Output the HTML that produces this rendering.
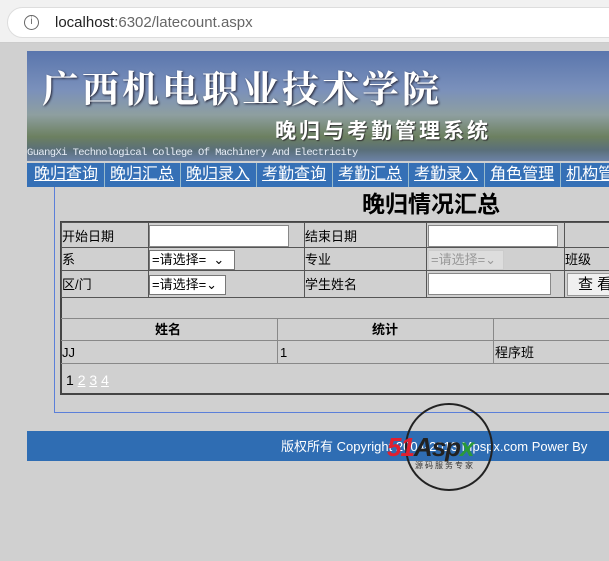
<!DOCTYPE html>
<html><head><meta charset="utf-8"><style>
*{margin:0;padding:0;box-sizing:border-box}
body{width:609px;height:561px;overflow:hidden;background:#d0d0d0;font-family:"Liberation Sans","Noto Sans CJK SC",sans-serif;position:relative;font-size:13px;color:#000;line-height:1}
.a{position:absolute}
#bar{left:0;top:0;width:609px;height:43px;background:#f1f1f1;border-bottom:1px solid #ccc}
#pill{left:7px;top:7px;width:620px;height:31px;background:#fff;border:1px solid #ddd;border-radius:16px}
#banner{left:27px;top:51px;width:582px;height:110px;background:linear-gradient(180deg,#5a76ad 0%,#7a90bb 35%,#8e9fa0 58%,#6c8060 78%,#5a6f7a 90%,#6c83a6 100%)}
#nav{left:27px;top:163px;width:582px;height:24px;background:#3570b6;white-space:nowrap;overflow:hidden;padding-left:2px}
#nav span{display:inline-block;color:#fff;text-decoration:underline;font-size:16px;line-height:24px;padding:0 6px 0 5px;border-right:1px solid #9bc}
.cell{position:absolute;border:1px solid #555}
input.t{position:absolute;background:#fff;border:1px solid #888;height:22px}
.sel{position:absolute;background:#fff;border:1px solid #777;height:20px;font-size:13px;line-height:18px;padding-left:2px}
</style></head><body>
<div id="bar" class="a"></div>
<div id="pill" class="a"></div>
<div class="a" style="left:24px;top:15px;width:15px;height:15px;border:1.5px solid #666;border-radius:50%;font-size:10px;line-height:12px;text-align:center;color:#666">i</div>
<div class="a" style="left:55px;top:15px;font-size:15px;color:#222">localhost<span style="color:#666">:6302/latecount.aspx</span></div>
<div id="banner" class="a"></div>
<div class="a" style="left:42px;top:68px;font-family:'Noto Serif CJK SC',serif;font-weight:bold;font-size:37px;letter-spacing:3px;color:#fff;text-shadow:1px 1px 2px #223">广西机电职业技术学院</div>
<div class="a" style="left:275px;top:121px;font-size:21px;letter-spacing:3px;color:#fff;font-weight:bold;text-shadow:1px 1px 1px #333">晚归与考勤管理系统</div>
<div class="a" style="left:27px;top:148px;font-family:'Liberation Mono',monospace;font-size:10.5px;letter-spacing:-0.6px;color:#e8eef8">GuangXi Technological College Of Machinery And Electricity</div>
<div id="nav" class="a"><span>晚归查询</span><span>晚归汇总</span><span>晚归录入</span><span>考勤查询</span><span>考勤汇总</span><span>考勤录入</span><span>角色管理</span><span>机构管理</span></div>
<div class="a" style="left:54px;top:187px;width:560px;height:226px;border-left:1px solid #5b7fd9;border-bottom:1px solid #5b7fd9"></div>
<div class="a" style="left:362px;top:193px;font-size:23px;font-weight:bold">晚归情况汇总</div>
<div class="a" style="left:60px;top:221px;width:560px;height:174px;border:2px solid #444"></div>
<div class="cell" style="left:61px;top:222px;width:88px;height:26px"></div>
<div class="cell" style="left:148px;top:222px;width:157px;height:26px"></div>
<div class="cell" style="left:304px;top:222px;width:123px;height:26px"></div>
<div class="cell" style="left:426px;top:222px;width:139px;height:26px"></div>
<div class="cell" style="left:564px;top:222px;width:50px;height:26px"></div>
<div class="cell" style="left:61px;top:247px;width:88px;height:24px"></div>
<div class="cell" style="left:148px;top:247px;width:157px;height:24px"></div>
<div class="cell" style="left:304px;top:247px;width:123px;height:24px"></div>
<div class="cell" style="left:426px;top:247px;width:139px;height:24px"></div>
<div class="cell" style="left:564px;top:247px;width:50px;height:24px"></div>
<div class="cell" style="left:61px;top:270px;width:88px;height:28px"></div>
<div class="cell" style="left:148px;top:270px;width:157px;height:28px"></div>
<div class="cell" style="left:304px;top:270px;width:123px;height:28px"></div>
<div class="cell" style="left:426px;top:270px;width:139px;height:28px"></div>
<div class="cell" style="left:564px;top:270px;width:50px;height:28px"></div>
<div class="a" style="left:62px;top:230px">开始日期</div>
<input class="t" style="left:149px;top:225px;width:140px">
<div class="a" style="left:305px;top:230px">结束日期</div>
<input class="t" style="left:428px;top:225px;width:130px">
<div class="a" style="left:62px;top:253px">系</div>
<div class="sel" style="left:149px;top:250px;width:86px">=请选择= &nbsp;⌄</div>
<div class="a" style="left:305px;top:253px">专业</div>
<div class="sel" style="left:428px;top:250px;width:76px;background:#ddd;color:#999;border-color:#ccc">=请选择=⌄</div>
<div class="a" style="left:565px;top:253px">班级</div>
<div class="a" style="left:62px;top:278px">区/门</div>
<div class="sel" style="left:149px;top:275px;width:77px">=请选择=⌄</div>
<div class="a" style="left:305px;top:278px">学生姓名</div>
<input class="t" style="left:428px;top:273px;width:123px">
<div class="a" style="left:567px;top:273px;width:50px;height:23px;background:#f0f0f0;border:1px solid #999;font-size:15px;padding-left:10px;line-height:21px">查 看</div>
<div class="a" style="left:61px;top:318px;width:560px;height:1px;background:#888"></div>
<div class="a" style="left:61px;top:340px;width:560px;height:1px;background:#888"></div>
<div class="a" style="left:61px;top:363px;width:560px;height:1px;background:#888"></div>
<div class="a" style="left:277px;top:318px;width:1px;height:45px;background:#888"></div>
<div class="a" style="left:493px;top:318px;width:1px;height:45px;background:#888"></div>
<div class="a" style="left:155px;top:323px;font-weight:bold">姓名</div>
<div class="a" style="left:372px;top:323px;font-weight:bold">统计</div>
<div class="a" style="left:62px;top:346px">JJ</div>
<div class="a" style="left:280px;top:346px">1</div>
<div class="a" style="left:495px;top:346px">程序班</div>
<div class="a" style="left:66px;top:373px;font-size:14px">1 <u style="color:#fff">2</u> <u style="color:#fff">3</u> <u style="color:#fff">4</u></div>
<div class="a" style="left:27px;top:431px;width:582px;height:30px;background:#2f6db3"></div>
<div class="a" style="left:281px;top:440px;color:#fff;font-size:13px">版权所有 Copyright 2004-2013 Mpspx.com Power By</div>
<div class="a" style="left:405px;top:403px;width:88px;height:88px;border:2px solid #222;border-radius:50%"></div>
<div class="a" style="left:387px;top:434px;font-size:26px;font-weight:bold;font-style:italic;color:#e02030;letter-spacing:-1px">51<span style="color:#222">Asp</span><span style="color:#2a9a3a">x</span></div>
<div class="a" style="left:415px;top:462px;font-size:8px;color:#333;letter-spacing:2px">源码服务专家</div>
</body></html>
